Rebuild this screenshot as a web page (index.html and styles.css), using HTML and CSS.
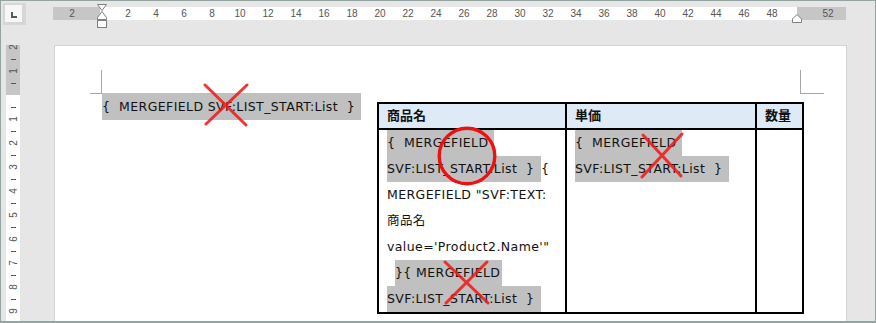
FILE: index.html
```html
<!DOCTYPE html>
<html lang="ja">
<head>
  <meta charset="UTF-8">
  <title>MERGEFIELD LIST_START</title>
  <link rel="stylesheet" href="styles.css">
</head>
<body>
  <div class="frame">
    <!-- ruler strip -->
    <div class="topbar">
      <div class="tab-sel"><div class="tab-face"><span class="tab-l"></span></div></div>
      <div class="hruler">
        <div class="hruler-nums">
          <span>2</span><span></span><span>2</span><span>4</span><span>6</span><span>8</span><span>10</span><span>12</span><span>14</span><span>16</span><span>18</span><span>20</span><span>22</span><span>24</span><span>26</span><span>28</span><span>30</span><span>32</span><span>34</span><span>36</span><span>38</span><span>40</span><span>42</span><span>44</span><span>46</span><span>48</span><span></span><span>52</span>
        </div>
        <svg class="indent-left" width="12" height="26" viewBox="0 0 12 26">
          <polygon points="1.5,1.5 10.5,1.5 6,7.5" fill="#fff" stroke="#808080"/>
          <polygon points="6,8.5 10.5,14.5 10.5,16.5 1.5,16.5 1.5,14.5" fill="#fff" stroke="#808080"/>
          <rect x="1.5" y="17.5" width="9" height="7" fill="#fff" stroke="#808080"/>
        </svg>
        <svg class="indent-right" width="12" height="10" viewBox="0 0 12 10">
          <polygon points="6,0.5 10.5,5 10.5,8.5 1.5,8.5 1.5,5" fill="#fff" stroke="#808080"/>
        </svg>
      </div>
    </div>

    <div class="main">
      <div class="vruler">
        <span class="num">2</span><span class="tick"></span>
        <span class="num">1</span><span class="tick"></span>
        <span class="num"></span><span class="tick"></span>
        <span class="num">1</span><span class="tick"></span>
        <span class="num">2</span><span class="tick"></span>
        <span class="num">3</span><span class="tick"></span>
        <span class="num">4</span><span class="tick"></span>
        <span class="num">5</span><span class="tick"></span>
        <span class="num">6</span><span class="tick"></span>
        <span class="num">7</span><span class="tick"></span>
        <span class="num">8</span><span class="tick"></span>
        <span class="num">9</span><span class="tick"></span>
      </div>

      <div class="page">
        <div class="marks">
          <span class="mark mark-l"></span>
          <span class="mark mark-r"></span>
        </div>
        <div class="content">
          <p class="lead"><span class="hl hl-lead">{&nbsp;&nbsp;MERGEFIELD SVF:LIST_START:List&nbsp;&nbsp;}</span></p>
          <table class="fields">
            <colgroup>
              <col class="col-name">
              <col class="col-price">
              <col class="col-qty">
            </colgroup>
            <thead>
              <tr><th>商品名</th><th>単価</th><th>数量</th></tr>
            </thead>
            <tbody>
              <tr>
                <td>
                  <div class="ln"><span class="hl hl-m">{&nbsp;&nbsp;MERGEFIELD</span></div>
                  <div class="ln"><span class="hl hl-s">SVF:LIST_START:List&nbsp;&nbsp;}</span>{</div>
                  <div class="ln">MERGEFIELD "SVF:TEXT:</div>
                  <div class="ln">商品名</div>
                  <div class="ln">value='Product2.Name'"</div>
                  <div class="ln ln-indent"><span class="hl hl-m">}{&nbsp;MERGEFIELD</span></div>
                  <div class="ln"><span class="hl hl-s">SVF:LIST_START:List&nbsp;&nbsp;}</span></div>
                </td>
                <td>
                  <div class="ln"><span class="hl hl-m">{&nbsp;&nbsp;MERGEFIELD</span></div>
                  <div class="ln"><span class="hl hl-s">SVF:LIST_START:List&nbsp;&nbsp;}</span></div>
                </td>
                <td></td>
              </tr>
            </tbody>
          </table>
        </div>
      </div>
    </div>

    <!-- red review marks drawn over the document -->
    <svg class="annot" width="876" height="323" viewBox="0 0 876 323">
      <g stroke="#f01c1c" stroke-width="3" stroke-linecap="round" opacity="0.88">
        <line x1="205" y1="85" x2="246" y2="125"/>
        <line x1="247" y1="85" x2="206" y2="124"/>
        <line x1="643" y1="135" x2="681" y2="176"/>
        <line x1="682" y1="134" x2="642" y2="177"/>
        <line x1="445" y1="262" x2="488" y2="303"/>
        <line x1="487" y1="262" x2="446" y2="303"/>
      </g>
      <circle cx="467" cy="156" r="27.8" fill="none" stroke="#ee1111" stroke-width="3.4"/>
    </svg>
  </div>
</body>
</html>
```

FILE: styles.css
```css
body {
  margin: 0;
  font-family: "Liberation Sans", "Noto Sans CJK JP", sans-serif;
}
.frame {
  position: relative;
  width: 876px;
  height: 323px;
  box-sizing: border-box;
  border: 1px solid #94a5a1;
  border-bottom-width: 2px;
  background: #e6e6e6;
  overflow: hidden;
}

/* top ruler strip */
.topbar {
  display: flex;
  align-items: flex-start;
  height: 44px;
  box-sizing: border-box;
  padding: 2px 0 0 2px;
}
.tab-sel {
  width: 23px;
  height: 22px;
  box-sizing: border-box;
  padding: 2px;
  background: #d6d6d6;
}
.tab-face {
  width: 17px;
  height: 17px;
  background: #f7f7f7;
  display: flex;
  align-items: center;
  justify-content: center;
}
.tab-l {
  width: 4px;
  height: 4px;
  border-left: 2px solid #595959;
  border-bottom: 2px solid #595959;
  margin-top: 2px;
}
.hruler {
  position: relative;
  margin: 4px 0 0 27px;
  width: 793px;
  height: 13px;
  background: linear-gradient(to right, #c6c6c6 47px, #fff 47px, #fff 744px, #c6c6c6 744px);
}
.hruler-nums {
  display: flex;
  padding-left: 5px;
  font-size: 10px;
  line-height: 13px;
  color: #555;
}
.hruler-nums span {
  flex: none;
  width: 28px;
  text-align: center;
}
.indent-left {
  position: absolute;
  left: 43px;
  top: -4px;
}
.indent-right {
  position: absolute;
  left: 738px;
  top: 7px;
}

/* left ruler + page */
.main {
  display: flex;
  align-items: flex-start;
}
.vruler {
  margin-left: 5px;
  width: 14px;
  height: 277px;
  overflow: hidden;
  display: flex;
  flex-direction: column;
  background: linear-gradient(#c6c6c6 50px, #fff 50px);
}
.vruler span {
  flex: none;
  height: 12px;
  display: flex;
  align-items: center;
  justify-content: center;
  font-size: 10px;
  color: #555;
}
.vruler span:first-child {
  margin-top: -4px;
}
.vruler .num {
  transform: rotate(-90deg);
}
.vruler .tick::before {
  content: "";
  width: 5px;
  height: 1px;
  background: #555;
}
.page {
  margin: 1px 0 0 35px;
  width: 791px;
  height: 290px;
  background: #fff;
  box-shadow: 0 0 0 1px #d4d4d4;
}
.marks {
  display: flex;
  justify-content: space-between;
  padding: 24px 22px 0 35px;
}
.mark {
  width: 11px;
  height: 23px;
  border-bottom: 1px solid #a6a6a6;
}
.mark-l {
  border-right: 1px solid #a6a6a6;
}
.mark-r {
  width: 23px;
  border-left: 1px solid #a6a6a6;
}
.content {
  display: flex;
  align-items: flex-start;
  margin-top: -1px;
  padding: 0 42px 0 47px;
  font-family: "DejaVu Sans", "Noto Sans CJK JP", sans-serif;
  font-size: 12.5px;
  letter-spacing: 0.4px;
  color: #111;
}
.lead {
  margin: 0;
}
.hl {
  display: inline-block;
  vertical-align: top;
  height: 26px;
  line-height: 26px;
  background: #c0c0c0;
  white-space: nowrap;
}
.hl-lead {
  width: 259px;
  height: 27px;
  line-height: 27px;
}
.hl-m {
  width: 107px;
}
.hl-s {
  width: 154px;
}

/* table */
.fields {
  margin: 9px 0 0 auto;
  width: 427px;
  table-layout: fixed;
  border-spacing: 0;
  border-top: 2px solid #000;
  border-left: 2px solid #000;
}
.col-name {
  width: 188px;
}
.col-price {
  width: 190px;
}
.col-qty {
  width: 47px;
}
.fields th,
.fields td {
  padding: 0 0 0 8px;
  border-right: 2px solid #000;
  border-bottom: 2px solid #000;
  text-align: left;
  vertical-align: top;
  font-size: 12.5px;
}
.fields th {
  height: 24px;
  line-height: 24px;
  background: #deeaf6;
  font-size: 13px;
  font-weight: bold;
  letter-spacing: 0;
}
.ln {
  height: 26px;
  line-height: 26px;
  white-space: nowrap;
}
.ln-indent {
  padding-left: 8px;
}
.annot {
  position: absolute;
  left: -1px;
  top: -1px;
  pointer-events: none;
}
```
